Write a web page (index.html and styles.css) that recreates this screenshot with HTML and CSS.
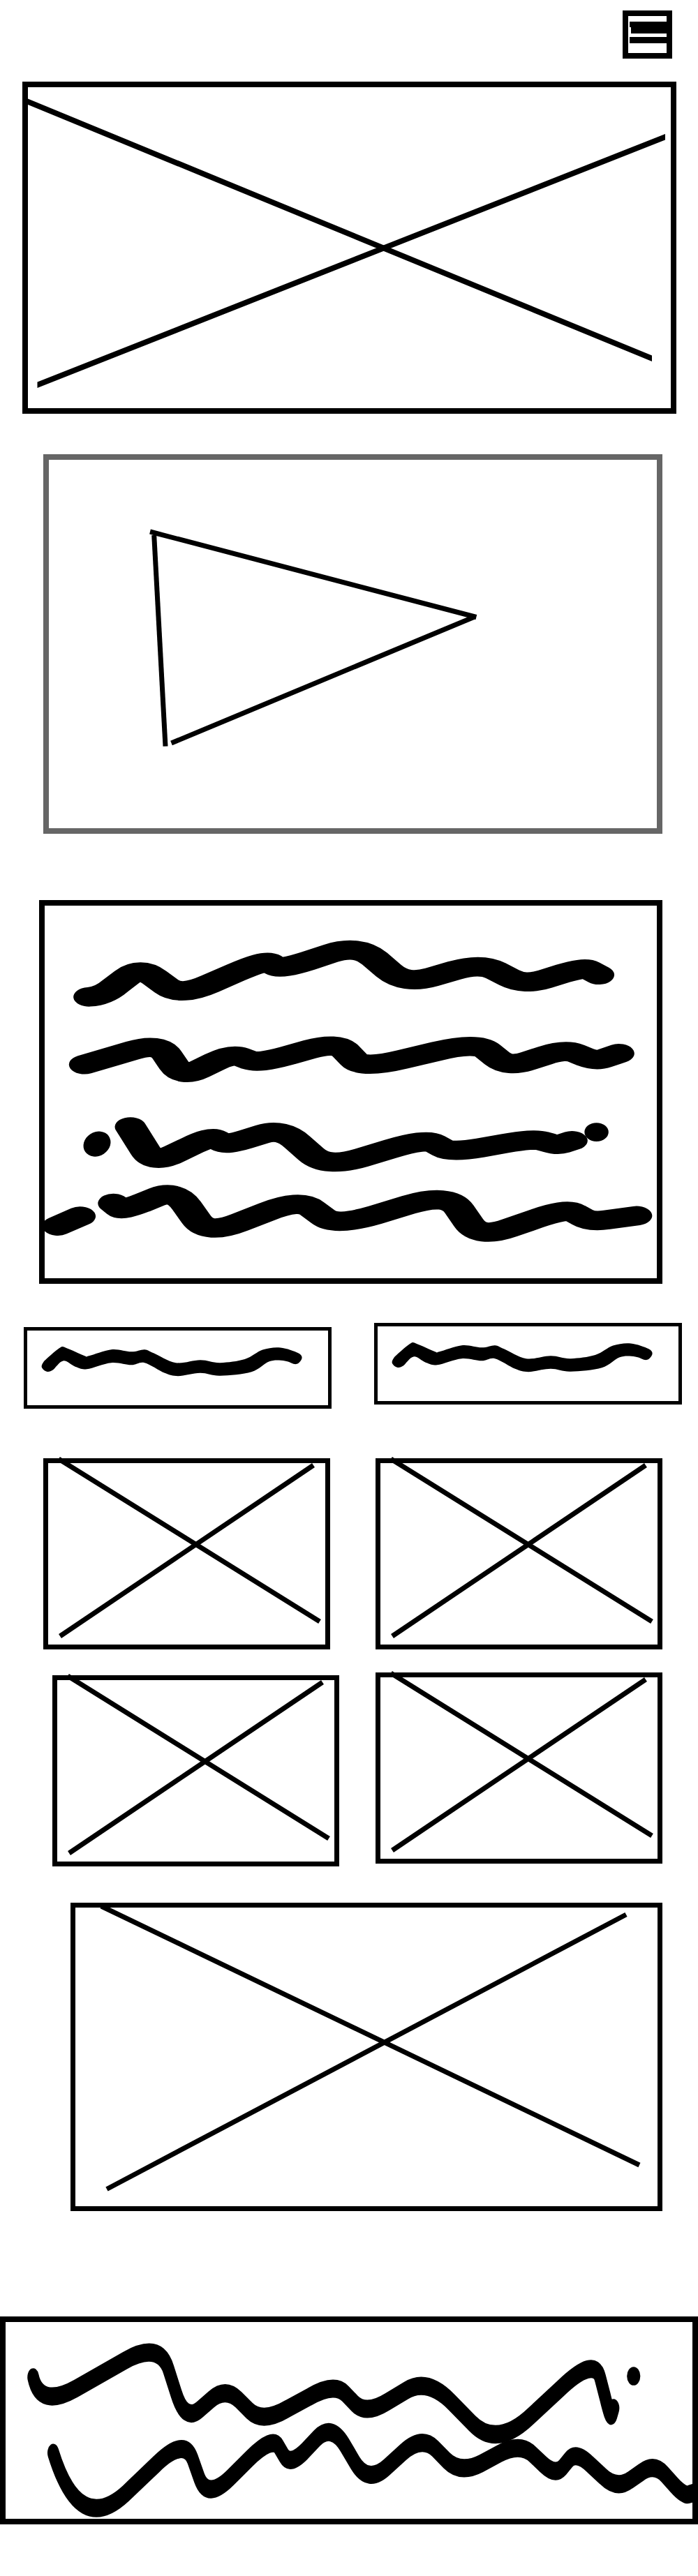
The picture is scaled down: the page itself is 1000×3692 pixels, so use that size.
FILE: index.html
```html
<!DOCTYPE html>
<html lang="en">
<head>
<meta charset="utf-8">
<title>Wireframe sketch</title>
<link rel="stylesheet" href="styles.css">
</head>
<body>
<header class="top">
  <div class="menu">
    <svg class="art" viewBox="900 23 55 53" preserveAspectRatio="none">
      <polygon points="902,31 955,31 955,48 904,48 904,39 902,39"/>
      <rect x="902" y="53" width="53" height="9"/>
    </svg>
  </div>
</header>

<div class="box hero">
  <svg class="art" viewBox="40 125 921 460" preserveAspectRatio="none">
    <polygon points="40,141.5 934,509.5 934,518 40,150"/>
    <polygon points="53.5,547.5 953,192 953,200.5 53.5,556"/>
  </svg>
</div>

<div class="box video">
  <svg class="art" viewBox="70 659 871 528" preserveAspectRatio="none">
    <line class="pen" x1="215" y1="762" x2="682.4" y2="884.5"/>
    <line class="pen" x1="220.7" y1="767" x2="237" y2="1069.6"/>
    <line class="pen" x1="245.5" y1="1065" x2="680" y2="884"/>
  </svg>
</div>

<div class="box text">
  <svg class="art" viewBox="100.4 96.1 1375.1 1350.5" preserveAspectRatio="none">
    <path class="brush" d="M200 427Q232 424 259 387L285 355Q315.5 318 347 356L374 388Q406 426 472 379L529 339Q595 292 608 304L618 315Q631 327 692 296L743 269Q804 238 841.5 288L873.5 332Q911 382 970 355L1021 331Q1080 304 1114 332L1144 357Q1178 385 1225 362L1265 342Q1312 319 1324 329L1345 347"/>
    <path class="brush" d="M190 672L298 621Q356 593 375 637L391 675Q410 719 448.5 689L481.5 663Q520 632.5 542 645L560 656Q582 668 643 641L696 617Q757 590 777 624L795 654Q815 688 904 653.5L981 624Q1070.5 589.5 1095.5 622L1117 650Q1142 682 1186.5 659L1224.5 639Q1269 616 1293.5 631L1314.5 645Q1339 660 1357 650L1390 632"/>
    <ellipse class="blob" cx="218" cy="960" rx="30" ry="46"/>
    <path class="brush" d="M293 898L327 985Q345 1032 390 997L429 967Q474 932 486 943L497 953Q509 964 552 943L590 924Q633 903 668 953L699 997Q734 1047 812 1009.5L878 977.5Q956 940 976 958L994 974Q1014 992 1079 974L1135 958Q1199.5 940 1218 949L1234 956Q1252 965 1264 959L1285 948"/>
    <ellipse cx="1340" cy="917" rx="27" ry="34"/>
    <line class="brush" x1="130" y1="1257" x2="180" y2="1222"/>
    <path class="brush" d="M255 1175L268 1192Q275 1201 317 1175L352 1152Q394 1126 419 1183L441 1233Q466 1290 538.5 1244L600.5 1205Q673 1159 701 1194L726 1224Q754 1259 843 1217L918 1180Q1007 1138 1031.5 1196L1052.5 1245Q1077 1303 1145 1264L1204 1231Q1272 1192 1291 1210L1308 1225Q1327 1243 1363 1235L1430 1220"/>
  </svg>
</div>

<div class="pair">
  <div class="box chip chip-low">
    <svg class="art" viewBox="61.2 68.3 675.8 270.6" preserveAspectRatio="none">
      <path class="ink" d="M95 190C97 184 98 180 105 170S128 136 135 130S141 127 150 132S182 155 190 160S190 164 200 160S234 140 250 137S282 145 295 145S317 136 325 137S333 142 345 150S377 181 395 185S433 175 450 175S478 186 495 185S534 180 550 172S577 145 590 138S617 128 630 130S662 143 670 150S679 163 678 170S671 189 665 190S650 180 640 178S617 173 605 180S583 209 565 218S514 231 495 232S466 222 450 222S413 233 400 233S382 230 370 222S337 190 325 185S307 193 295 193S267 183 250 185S208 206 195 208S179 205 170 200S151 176 142 178S124 206 118 212S109 218 105 217S97 210 95 205S93 196 95 190Z"/>
    </svg>
  </div>
  <div class="box chip">
    <svg class="art" viewBox="61.2 68.3 675.8 270.6" preserveAspectRatio="none">
      <path class="ink" d="M95 190C97 184 98 180 105 170S128 136 135 130S141 127 150 132S182 155 190 160S190 164 200 160S234 140 250 137S282 145 295 145S317 136 325 137S333 142 345 150S377 181 395 185S433 175 450 175S478 186 495 185S534 180 550 172S577 145 590 138S617 128 630 130S662 143 670 150S679 163 678 170S671 189 665 190S650 180 640 178S617 173 605 180S583 209 565 218S514 231 495 232S466 222 450 222S413 233 400 233S382 230 370 222S337 190 325 185S307 193 295 193S267 183 250 185S208 206 195 208S179 205 170 200S151 176 142 178S124 206 118 212S109 218 105 217S97 210 95 205S93 196 95 190Z"/>
    </svg>
  </div>
</div>

<div class="grid-row grid-row-one">
  <div class="box thumb">
    <svg class="art" viewBox="7 7 397 260" preserveAspectRatio="none">
      <line class="pen" x1="22" y1="1" x2="396" y2="234"/>
      <line class="pen" x1="24" y1="255" x2="387" y2="10"/>
    </svg>
  </div>
  <div class="box thumb">
    <svg class="art" viewBox="7 7 397 260" preserveAspectRatio="none">
      <line class="pen" x1="22" y1="1" x2="396" y2="234"/>
      <line class="pen" x1="24" y1="255" x2="387" y2="10"/>
    </svg>
  </div>
</div>

<div class="grid-row grid-row-two">
  <div class="box thumb thumb-low">
    <svg class="art" viewBox="7 7 397 260" preserveAspectRatio="none">
      <line class="pen" x1="22" y1="1" x2="396" y2="234"/>
      <line class="pen" x1="24" y1="255" x2="387" y2="10"/>
    </svg>
  </div>
  <div class="box thumb">
    <svg class="art" viewBox="7 7 397 260" preserveAspectRatio="none">
      <line class="pen" x1="22" y1="1" x2="396" y2="234"/>
      <line class="pen" x1="24" y1="255" x2="387" y2="10"/>
    </svg>
  </div>
</div>

<div class="box feature">
  <svg class="art" viewBox="108 2734 834 428" preserveAspectRatio="none">
    <line class="pen" x1="145" y1="2732" x2="916" y2="3103"/>
    <line class="pen" x1="153" y1="3137.5" x2="897" y2="2744"/>
  </svg>
</div>

<footer class="box signature">
  <svg class="art" viewBox="13 28 1542 281.3" preserveAspectRatio="none">
    <path class="nib" d="M75 107Q90 152 171 123L281 83Q359 55 379 96L396 130Q416 171 448 153.5L475 138.5Q507 121 536 139L561 155Q590 173 646 152L695 135Q751 114 776 130.5L797 144.5Q822 161 870 142L912 126Q960 107 1015 143L1061 173Q1116 209 1193 162L1259 123Q1336 76 1348 108L1359 135Q1371 167 1373.5 161L1378 151"/>
    <ellipse cx="1423" cy="105.3" rx="15" ry="13.3"/>
    <path class="nib" d="M120 215Q178 335 283 273L352 231Q415 192 433 224L448 251Q466 283 517 251L561 223Q612 191 626 206L638 219Q651.5 234 684 213L712 194Q745 173 774 203.5L798 229.5Q827 260 869 235.5L905 214.5Q947 190 977.5 209L1003.5 226Q1034 245.5 1081 230L1122 216Q1169 200 1196 217L1220 231.5Q1247 248 1263.5 236L1277.5 225Q1294 212 1326 232L1353 248Q1385 268 1415 254L1440 243Q1469 229 1493 246L1514 261Q1538 278 1549 274L1568 270"/>
  </svg>
</footer>
</body>
</html>
```

FILE: styles.css
```css
* {
  box-sizing: border-box;
}

html,
body {
  margin: 0;
  padding: 0;
  background: #fff;
}

body {
  width: 1000px;
  height: 3692px;
  overflow: hidden;
  font-family: "Liberation Sans", sans-serif;
}

.top {
  display: flex;
  justify-content: flex-end;
  padding: 15px 37px 0 0;
}

.menu {
  width: 71px;
  height: 69px;
  border: 8px solid #000;
}

.box {
  border: 8px solid #000;
  background: #fff;
}

.art {
  display: block;
  width: 100%;
  height: 100%;
  overflow: visible;
}

.art polygon,
.art rect,
.art ellipse,
.ink {
  fill: #000;
}

.pen,
.brush,
.nib {
  fill: none;
  stroke: #000;
}

.pen {
  stroke-width: 7;
}

.brush {
  stroke-width: 70;
  stroke-linecap: round;
  stroke-linejoin: round;
}

.nib {
  stroke-width: 26;
  stroke-linecap: round;
  stroke-linejoin: round;
}

.blob {
  transform: rotate(10deg);
  transform-origin: 218px 960px;
}

.hero {
  width: 937px;
  height: 476px;
  margin: 33px 0 0 32px;
}

.video {
  width: 887px;
  height: 544px;
  margin: 58px 0 0 62px;
  border-color: #666;
}

.text {
  width: 893px;
  height: 550px;
  margin: 95px 0 0 56px;
}

.pair {
  display: flex;
  align-items: flex-start;
  gap: 61px;
  margin-top: 56px;
  padding-left: 34px;
}

.chip {
  width: 441px;
  height: 117px;
  border-width: 5px;
}

.chip-low {
  margin-top: 6px;
}

.grid-row {
  display: flex;
  align-items: flex-start;
}

.grid-row-one {
  gap: 65px;
  margin-top: 71px;
  padding-left: 62px;
}

.grid-row-two {
  gap: 52px;
  margin-top: 33px;
  padding-left: 75px;
}

.thumb {
  width: 411px;
  height: 274px;
  border-width: 7px;
}

.thumb-low {
  margin-top: 4px;
}

.feature {
  width: 848px;
  height: 442px;
  margin: 52px 0 0 101px;
  border-width: 7px;
}

.signature {
  width: 1000px;
  height: 298px;
  margin-top: 151px;
  overflow: hidden;
}
```
